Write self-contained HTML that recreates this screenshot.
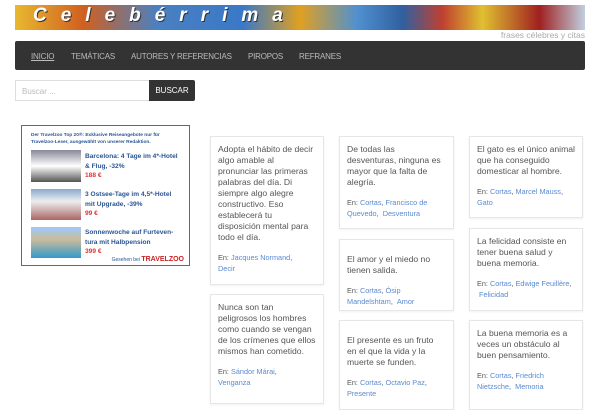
<!DOCTYPE html>
<html><head><meta charset="utf-8"><style>
*{box-sizing:border-box;margin:0;padding:0}
body{width:600px;height:400px;overflow:hidden;background:#fff;font-family:"Liberation Sans",sans-serif;position:relative}
.ban{position:absolute;left:15px;top:5px;width:570px;height:25px;background:linear-gradient(90deg,#e8b830 0%,#d06020 12%,#4a80c0 25%,#3a78c8 40%,#e0a020 50%,#5090d0 60%,#3060a0 68%,#c04030 75%,#e0c030 82%,#a02020 92%,#c0d0e0 100%);overflow:hidden}
.ban span{position:absolute;left:18px;top:0px;font:italic bold 19px "Liberation Sans",sans-serif;color:#fff;letter-spacing:14px;text-shadow:1px 1px 0 #333}
.tag{position:absolute;right:15px;top:30px;font-size:8.5px;color:#aaa}
.nav{position:absolute;left:15px;top:41px;width:570px;height:29px;background:#333;border-radius:2px}
.nav a{position:absolute;top:11px;font-size:8px;letter-spacing:-0.2px;color:#bbb;text-decoration:none}
.inp{position:absolute;left:15px;top:80px;width:135px;height:21px;border:1px solid #ddd;font-size:8px;color:#bbb;padding:6px 6px}
.btn{position:absolute;left:149px;top:80px;width:46px;height:21px;background:#333;color:#fff;font-size:8px;text-align:center;line-height:21px;border-radius:0 2px 2px 0}
.ad{position:absolute;left:21px;top:125px;width:169px;height:141px;border:1px solid #3b6fb0;font-size:6px;color:#2a5595;white-space:nowrap}
.card{position:absolute;background:#fff;border:1px solid #e6e6e6;box-shadow:0 1px 2px rgba(0,0,0,.06);padding:7px 7px;font-size:8.6px;line-height:11px;color:#555;white-space:nowrap}
.card p{margin-bottom:9px}
.card .m{font-size:7.3px;color:#555}
.card .m a{color:#5a8ad0;text-decoration:none}
</style></head><body>
<div class="ban"><span>Celebérrima</span></div>
<div class="tag">frases célebres y citas</div>
<div class="nav">
<a style="left:16px;text-decoration:underline">INICIO</a>
<a style="left:56px">TEMÁTICAS</a>
<a style="left:116px">AUTORES Y REFERENCIAS</a>
<a style="left:233px">PIROPOS</a>
<a style="left:284px">REFRANES</a>
</div>
<div class="inp">Buscar ...</div>
<div class="btn">BUSCAR</div>
<div class="ad">
<div style="position:absolute;left:9px;top:6px;font-weight:bold;line-height:7px;font-size:4.8px">Der Travelzoo Top 20®: Exklusive Reiseangebote nur für<br>Travelzoo-Leser, ausgewählt von unserer Redaktion.</div>
<div style="position:absolute;left:9px;top:24px;width:50px;height:32px;background:linear-gradient(#889,#fff 50%,#555)"></div>
<div style="position:absolute;left:9px;top:63px;width:50px;height:31px;background:linear-gradient(#8ac,#eee 40%,#a66)"></div>
<div style="position:absolute;left:9px;top:101px;width:50px;height:31px;background:linear-gradient(#9cf,#cb9 40%,#39c)"></div>
<div style="position:absolute;left:63px;top:26px;font-size:6.6px;font-weight:bold;line-height:9.5px">Barcelona: 4 Tage im 4*-Hotel<br>&amp; Flug, -32%<br><span style="color:#d33">188 €</span></div>
<div style="position:absolute;left:63px;top:64px;font-size:6.6px;font-weight:bold;line-height:9.5px">3 Ostsee-Tage im 4,5*-Hotel<br>mit Upgrade, -39%<br><span style="color:#d33">99 €</span></div>
<div style="position:absolute;left:63px;top:102px;font-size:6.6px;font-weight:bold;line-height:9.5px">Sonnenwoche auf Furteven-<br>tura mit Halbpension<br><span style="color:#d33">399 €</span></div>
<div style="position:absolute;right:5px;top:130px;font-size:5px">Gesehen bei <b style="color:#c22;font-size:7px">TRAVELZOO</b></div>
</div>

<div class="card" style="left:210px;top:136px;width:114px;height:149px"><p>Adopta el hábito de decir<br>algo amable al<br>pronunciar las primeras<br>palabras del día. Di<br>siempre algo alegre<br>constructivo. Eso<br>establecerá tu<br>disposición mental para<br>todo el día.</p><div class="m">En: <a>Jacques Normand</a>,<br><a>Decir</a></div></div>
<div class="card" style="left:210px;top:294px;width:114px;height:110px"><p>Nunca son tan<br>peligrosos los hombres<br>como cuando se vengan<br>de los crímenes que ellos<br>mismos han cometido.</p><div class="m">En: <a>Sándor Márai</a>,<br><a>Venganza</a></div></div>

<div class="card" style="left:339px;top:136px;width:115px;height:93px"><p>De todas las<br>desventuras, ninguna es<br>mayor que la falta de<br>alegría.</p><div class="m">En: <a>Cortas</a>, <a>Francisco de</a><br><a>Quevedo</a>, &nbsp;<a>Desventura</a></div></div>
<div class="card" style="left:339px;top:239px;width:115px;height:72px;padding-top:14px"><p>El amor y el miedo no<br>tienen salida.</p><div class="m">En: <a>Cortas</a>, <a>Ósip</a><br><a>Mandelshtam</a>, &nbsp;<a>Amor</a></div></div>
<div class="card" style="left:339px;top:320px;width:115px;height:90px;padding-top:14px"><p>El presente es un fruto<br>en el que la vida y la<br>muerte se funden.</p><div class="m">En: <a>Cortas</a>, <a>Octavio Paz</a>,<br><a>Presente</a></div></div>

<div class="card" style="left:469px;top:136px;width:114px;height:82px"><p>El gato es el único animal<br>que ha conseguido<br>domesticar al hombre.</p><div class="m">En: <a>Cortas</a>, <a>Marcel Mauss</a>,<br><a>Gato</a></div></div>
<div class="card" style="left:469px;top:228px;width:114px;height:83px"><p>La felicidad consiste en<br>tener buena salud y<br>buena memoria.</p><div class="m">En: <a>Cortas</a>, <a>Edwige Feuillère</a>,<br>&nbsp;<a>Felicidad</a></div></div>
<div class="card" style="left:469px;top:320px;width:114px;height:90px"><p>La buena memoria es a<br>veces un obstáculo al<br>buen pensamiento.</p><div class="m">En: <a>Cortas</a>, <a>Friedrich</a><br><a>Nietzsche</a>, &nbsp;<a>Memoria</a></div></div>
</body></html>
